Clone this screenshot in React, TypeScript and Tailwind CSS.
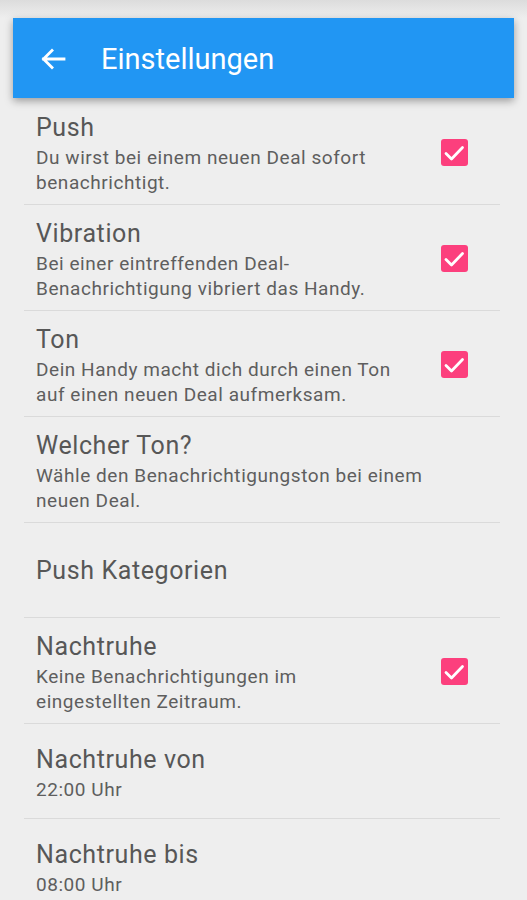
import React from "react";

interface Pref {
  title: string;
  summary?: string[];
  checked?: boolean;
}

const prefs: Pref[] = [
  { title: "Push", summary: ["Du wirst bei einem neuen Deal sofort", "benachrichtigt."], checked: true },
  { title: "Vibration", summary: ["Bei einer eintreffenden Deal-", "Benachrichtigung vibriert das Handy."], checked: true },
  { title: "Ton", summary: ["Dein Handy macht dich durch einen Ton", "auf einen neuen Deal aufmerksam."], checked: true },
  { title: "Welcher Ton?", summary: ["Wähle den Benachrichtigungston bei einem", "neuen Deal."] },
  { title: "Push Kategorien" },
  { title: "Nachtruhe", summary: ["Keine Benachrichtigungen im", "eingestellten Zeitraum."], checked: true },
  { title: "Nachtruhe von", summary: ["22:00 Uhr"] },
  { title: "Nachtruhe bis", summary: ["08:00 Uhr"] },
];

function CheckBox() {
  return (
    <div className="flex h-[27px] w-[27px] items-center justify-center rounded-[3px] bg-[#fc3f7d]">
      <svg width="27" height="27" viewBox="0 0 27 27" fill="none">
        <path d="M5 14.5 L10.5 20 L21.5 8.5" stroke="white" strokeWidth="2.8" strokeLinecap="round" strokeLinejoin="round" />
      </svg>
    </div>
  );
}

export default function App() {
  return (
    <div
      className="h-[900px] w-[527px] overflow-hidden bg-[#eeeeee]"
      style={{ fontFamily: "Roboto, 'Noto Sans', sans-serif" }}
    >
      {/* status bar fade */}
      <div className="h-[18px] bg-gradient-to-b from-[#dcdcdc] to-[#eeeeee]" />

      {/* App bar */}
      <div className="relative z-10 mx-[13px] flex h-[80px] items-center bg-[#2196f3] shadow-[0_3px_8px_rgba(0,0,0,0.35)]">
        <svg className="ml-[27px] mt-px" width="26" height="22" viewBox="0 0 26 22" fill="none">
          <path d="M24 11 H3.5 M12 2.5 L3.5 11 L12 19.5" stroke="white" strokeWidth="2.8" strokeLinecap="square" />
        </svg>
        <span className="ml-[35px] mt-[4px] text-[29px] text-white">Einstellungen</span>
      </div>

      {/* Preferences */}
      <div className="ml-[24px] mr-[27px] pt-px">
        {prefs.map((p, i) => (
          <div
            key={p.title}
            className={`flex min-h-[95px] items-center pt-[10.5px] pb-[9.5px] pl-[12px] pr-[32px] ${i < prefs.length - 1 ? "border-b border-[#dadada]" : ""}`}
          >
            <div className="flex-1">
              <div className="text-[25px] leading-[35px] tracking-[0.6px] text-[#575757]">{p.title}</div>
              {p.summary?.map((line) => (
                <div key={line} className="text-[19px] leading-[25px] tracking-[0.55px] text-[#5e5e5e]">
                  {line}
                </div>
              ))}
            </div>
            {p.checked && <CheckBox />}
          </div>
        ))}
      </div>
    </div>
  );
}
